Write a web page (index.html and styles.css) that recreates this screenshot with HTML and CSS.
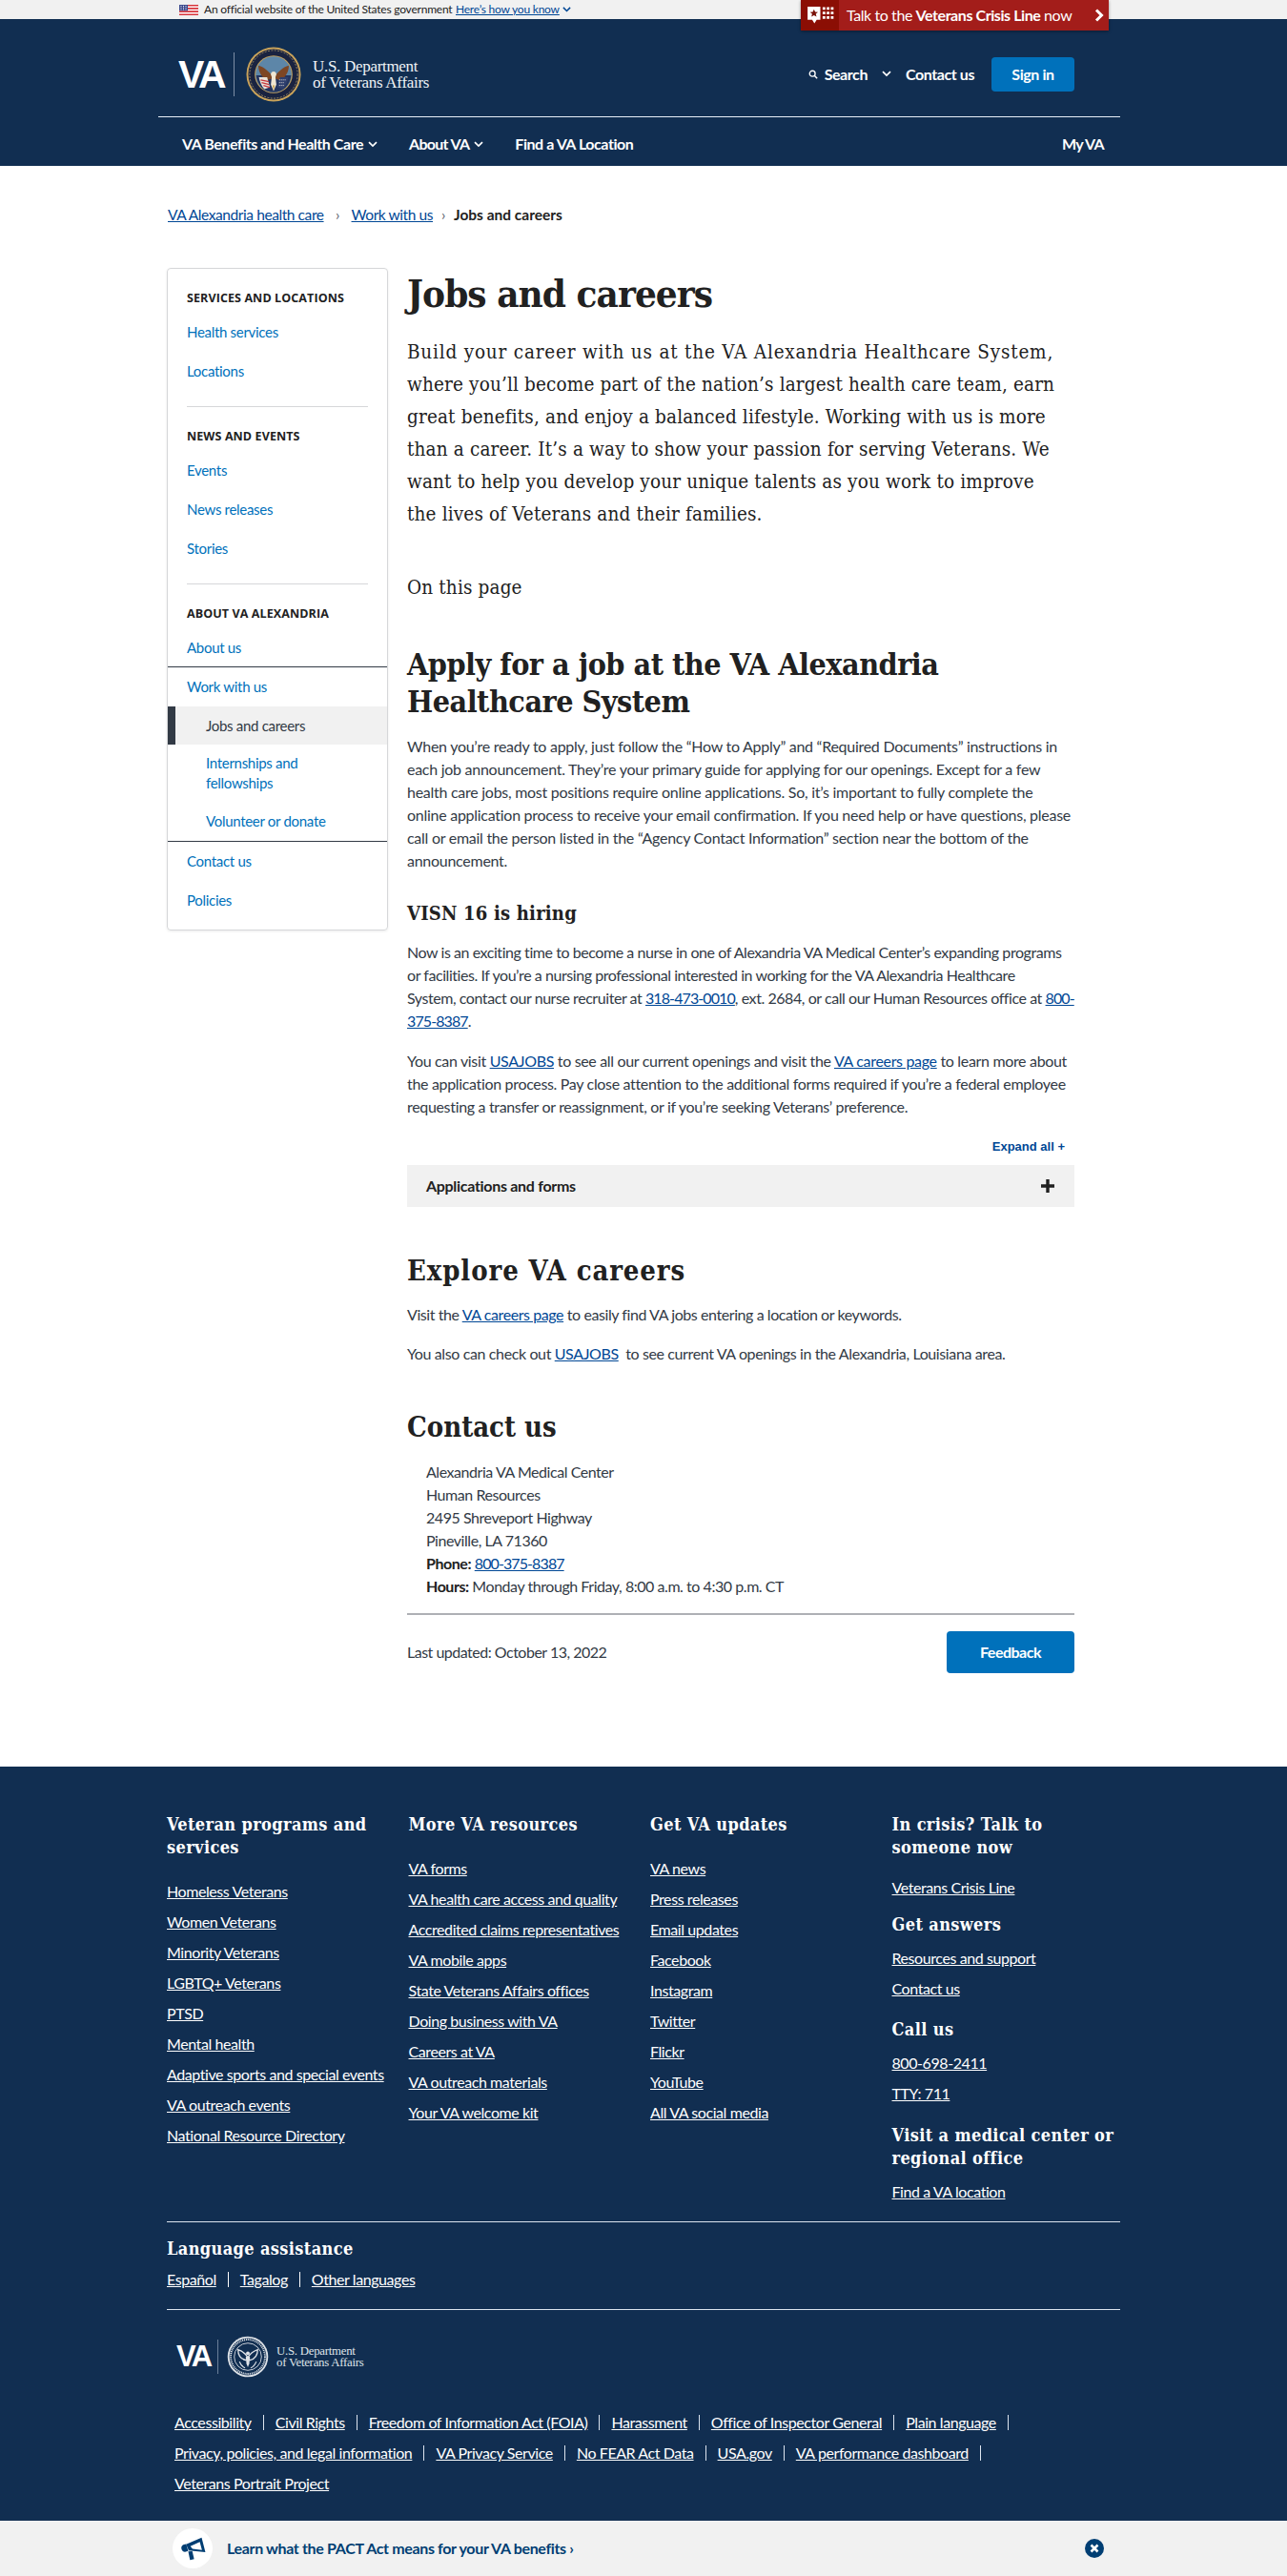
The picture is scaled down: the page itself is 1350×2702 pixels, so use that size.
FILE: index.html
```html
<!DOCTYPE html>
<html lang="en">
<head>
<meta charset="utf-8">
<title>Jobs and careers | VA Alexandria health care</title>
<link rel="stylesheet" href="styles.css">
</head>
<body>
<svg class="defs" width="0" height="0" aria-hidden="true">
  <defs>
    <symbol id="chev" viewBox="0 0 12 8"><path d="M1.2 1.2 6 6 10.8 1.2" fill="none" stroke="currentColor" stroke-width="2"/></symbol>
  </defs>
</svg>

<div class="gov-banner">
  <svg class="flag" viewBox="0 0 20 11" aria-hidden="true">
    <rect width="20" height="11" fill="#fff"/>
    <path d="M0 0h20v1.6H0zM0 3.1h20v1.6H0zM0 6.3h20v1.6H0zM0 9.4h20V11H0z" fill="#d8353b"/>
    <rect width="9" height="6.3" fill="#3c4a8e"/>
    <path d="M1.5 1.5h1M4 1.5h1M6.5 1.5h1M1.5 3.2h1M4 3.2h1M6.5 3.2h1M1.5 4.9h1M4 4.9h1M6.5 4.9h1" stroke="#fff" stroke-width=".9"/>
  </svg>
  <span class="gov-text">An official website of the United States government</span>
  <a class="gov-link" href="#">Here’s how you know</a>
  <svg class="gov-chev" aria-hidden="true"><use href="#chev"/></svg>
</div>

<a class="crisis" href="#">
  <span class="crisis-icon">
    <svg viewBox="0 0 30 22" width="30" height="22" aria-hidden="true">
      <path d="M1 1h14v14.500h-4l-2.500 4-2.500-4H1z" fill="#fff"/>
      <path d="m8 3.800 1.300 2.900 3.100.3-2.400 2 .8 3.100L8 10.500l-2.800 1.600.8-3.100-2.400-2 3.100-.3z" fill="#7a1208"/>
      <path d="M17.500 1.500h3v3h-3zM22 1.500h3v3h-3zM26.500 1.500h3v3h-3zM17.500 6.500h3v3h-3zM22 6.500h3v3h-3zM26.500 6.500h3v3h-3zM17.500 11.500h3v3h-3zM22 11.500h3v3h-3zM26.500 11.500h3v3h-3z" fill="#fff"/>
    </svg>
  </span>
  <span class="crisis-text">Talk to the <b>Veterans Crisis Line</b> now</span>
  <svg class="crisis-chev" viewBox="0 0 10 14" aria-hidden="true"><path d="M2 1.500 7.500 7 2 12.500" fill="none" stroke="#fff" stroke-width="3"/></svg>
</a>

<header class="masthead">
  <div class="masthead-top">
    <a class="logo" href="#">
      <span class="logo-va">VA</span>
      <span class="logo-rule"></span>
      <svg class="seal" viewBox="0 0 60 60" aria-hidden="true">
        <circle cx="30" cy="30" r="29.500" fill="#c9a35a"/>
        <circle cx="30" cy="30" r="27.500" fill="#1a2340"/>
        <circle cx="30" cy="30" r="26" fill="none" stroke="#b9a26c" stroke-width=".8" stroke-dasharray="2 1.500"/>
        <circle cx="30" cy="30" r="20.500" fill="#c9a35a"/>
        <circle cx="30" cy="30" r="19.500" fill="#5d86a8"/>
        <path d="M11 31h38c-1 11-9 18.500-19 18.500S12 42 11 31z" fill="#23345f"/>
        <path d="M30 34C26 28 20 22 13.500 20.500c0 6 3 13 9.500 16z" fill="#7d4624"/>
        <path d="M30 34c4-6 10-12 16.500-13.500 0 6-3 13-9.500 16z" fill="#7d4624"/>
        <path d="M14 33h9l3 11-6 2c-3-3-5-8-6-13z" fill="#e9e2d9"/>
        <path d="M16 36l9 2M17 39l8 2M19 42l7 2" stroke="#c8373c" stroke-width="1.300"/>
        <path d="M46 33h-9l-3 11 6 2c3-3 5-8 6-13z" fill="#2e3f6d"/>
        <path d="M36 36h7M36 39h6M36 42h5" stroke="#e9e2d9" stroke-width="1" stroke-dasharray="1 1"/>
        <path d="M27 30c0-2 1.500-3 3-3s3 1 3 3l-1 3 1 8-3 7-3-7 1-8z" fill="#f0e6d2"/>
        <path d="m29 42 1 6 1-6z" fill="#c59a3e"/>
      </svg>
      <span class="logo-text">U.S. Department<br>of Veterans Affairs</span>
    </a>
    <div class="utility">
      <a class="util-search" href="#">
        <svg class="search-ico" viewBox="0 0 12 12" aria-hidden="true"><circle cx="5" cy="5" r="3.500" fill="none" stroke="#fff" stroke-width="1.600"/><path d="m7.500 7.500 3.500 3.500" stroke="#fff" stroke-width="1.800"/></svg>
        <span>Search</span>
        <svg class="util-chev" aria-hidden="true"><use href="#chev"/></svg>
      </a>
      <a class="util-link" href="#">Contact us</a>
      <a class="signin" href="#">Sign in</a>
    </div>
  </div>
  <nav class="mainnav">
    <a class="nav-item" href="#">VA Benefits and Health Care<svg class="nav-chev" aria-hidden="true"><use href="#chev"/></svg></a>
    <a class="nav-item nav-tight" href="#">About VA<svg class="nav-chev" aria-hidden="true"><use href="#chev"/></svg></a>
    <a class="nav-item" href="#">Find a VA Location</a>
    <a class="nav-item nav-tight nav-right" href="#">My VA</a>
  </nav>
</header>

<nav class="crumbs">
  <a href="#">VA Alexandria health care</a><span class="crumb-sep">›</span><a href="#">Work with us</a><span class="crumb-sep crumb-sep-last">›</span><b>Jobs and careers</b>
</nav>

<div class="page">
  <aside class="sidenav">
    <h2 class="side-h side-h-first">Services and locations</h2>
    <a class="side-a" href="#">Health services</a>
    <a class="side-a" href="#">Locations</a>
    <hr class="side-rule">
    <h2 class="side-h">News and events</h2>
    <a class="side-a" href="#">Events</a>
    <a class="side-a" href="#">News releases</a>
    <a class="side-a" href="#">Stories</a>
    <hr class="side-rule">
    <h2 class="side-h">About VA Alexandria</h2>
    <a class="side-a" href="#">About us</a>
    <div class="side-nest">
      <a class="side-a" href="#">Work with us</a>
      <a class="side-a sub current" href="#">Jobs and careers</a>
      <a class="side-a sub multi" href="#">Internships and fellowships</a>
      <a class="side-a sub" href="#">Volunteer or donate</a>
    </div>
    <a class="side-a" href="#">Contact us</a>
    <a class="side-a" href="#">Policies</a>
  </aside>

  <main class="content">
    <h1>Jobs and careers</h1>
    <p class="lead"><span class="lead-first">Build your career with us at the VA Alexandria Healthcare System,</span><br>where you’ll become part of the nation’s largest health care team, earn<br>great benefits, and enjoy a balanced lifestyle. Working with us is more<br>than a career. It’s a way to show your passion for serving Veterans. We<br>want to help you develop your unique talents as you work to improve<br>the lives of Veterans and their families.</p>
    <p class="onpage">On this page</p>
    <h2 class="h-apply">Apply for a job at the VA Alexandria Healthcare System</h2>
    <p class="p-apply">When you’re ready to apply, just follow the “How to Apply” and “Required Documents” instructions in each job announcement. They’re your primary guide for applying for our openings. Except for a few health care jobs, most positions require online applications. So, it’s important to fully complete the online application process to receive your email confirmation. If you need help or have questions, please call or email the person listed in the “Agency Contact Information” section near the bottom of the announcement.</p>
    <h3>VISN 16 is hiring</h3>
    <p class="p-visn">Now is an exciting time to become a nurse in one of Alexandria VA Medical Center’s expanding programs or facilities. If you’re a nursing professional interested in working for the VA Alexandria Healthcare<br>System, contact our nurse recruiter at <a class="phone" href="#">318-473-0010</a>, ext. 2684, or call our Human Resources office at <a class="phone" href="#">800-<wbr>375-8387</a>.</p>
    <p class="p-visit">You can visit <a href="#">USAJOBS</a> to see all our current openings and visit the <a href="#">VA careers page</a> to learn more about the application process. Pay close attention to the additional forms required if you’re a federal employee requesting a transfer or reassignment, or if you’re seeking Veterans’ preference.</p>
    <div class="expand">Expand all +</div>
    <div class="accordion"><span>Applications and forms</span>
      <svg class="plus" viewBox="0 0 16 16" aria-hidden="true"><path d="M8 1v14M1 8h14" stroke="#212121" stroke-width="3.400"/></svg>
    </div>
    <h2 class="h-sec h-explore">Explore VA careers</h2>
    <p class="p-a">Visit the <a href="#">VA careers page</a> to easily find VA jobs entering a location or keywords.</p>
    <p class="p-b">You also can check out <a href="#">USAJOBS</a>&nbsp; to see current VA openings in the Alexandria, Louisiana area.</p>
    <h2 class="h-sec h-contact">Contact us</h2>
    <address>
      Alexandria VA Medical Center<br>
      Human Resources<br>
      2495 Shreveport Highway<br>
      Pineville, LA 71360<br>
      <b>Phone:</b> <a class="phone" href="#">800-375-8387</a><br>
      <b>Hours:</b> Monday through Friday, 8:00 a.m. to 4:30 p.m. CT
    </address>
    <div class="updated">
      <span>Last updated: October 13, 2022</span>
      <a class="feedback" href="#">Feedback</a>
    </div>
  </main>
</div>

<footer class="footer">
  <div class="foot-cols">
    <div class="foot-col">
      <h2>Veteran programs and services</h2>
      <a href="#">Homeless Veterans</a>
      <a href="#">Women Veterans</a>
      <a href="#">Minority Veterans</a>
      <a href="#">LGBTQ+ Veterans</a>
      <a href="#">PTSD</a>
      <a href="#">Mental health</a>
      <a href="#">Adaptive sports and special events</a>
      <a href="#">VA outreach events</a>
      <a href="#">National Resource Directory</a>
    </div>
    <div class="foot-col">
      <h2>More VA resources</h2>
      <a href="#">VA forms</a>
      <a href="#">VA health care access and quality</a>
      <a href="#">Accredited claims representatives</a>
      <a href="#">VA mobile apps</a>
      <a href="#">State Veterans Affairs offices</a>
      <a href="#">Doing business with VA</a>
      <a href="#">Careers at VA</a>
      <a href="#">VA outreach materials</a>
      <a href="#">Your VA welcome kit</a>
    </div>
    <div class="foot-col">
      <h2>Get VA updates</h2>
      <a href="#">VA news</a>
      <a href="#">Press releases</a>
      <a href="#">Email updates</a>
      <a href="#">Facebook</a>
      <a href="#">Instagram</a>
      <a href="#">Twitter</a>
      <a href="#">Flickr</a>
      <a href="#">YouTube</a>
      <a href="#">All VA social media</a>
    </div>
    <div class="foot-col foot-col-last">
      <h2 class="fh-crisis">In crisis? Talk to someone now</h2>
      <a href="#">Veterans Crisis Line</a>
      <h2 class="fh-next">Get answers</h2>
      <a href="#">Resources and support</a>
      <a href="#">Contact us</a>
      <h2 class="fh-next fh-call">Call us</h2>
      <a href="#">800-698-2411</a>
      <a href="#">TTY: 711</a>
      <h2 class="fh-next fh-visit">Visit a medical center or regional office</h2>
      <a href="#">Find a VA location</a>
    </div>
  </div>
  <div class="foot-lang">
    <h2>Language assistance</h2>
    <div class="lang-links"><a href="#">Español</a><a href="#">Tagalog</a><a href="#">Other languages</a></div>
  </div>
  <a class="foot-logo" href="#">
    <span class="flogo-va">VA</span>
    <span class="flogo-rule"></span>
    <svg class="fseal" viewBox="0 0 60 60" aria-hidden="true">
      <circle cx="30" cy="30" r="29" fill="#dfe3e8"/>
      <circle cx="30" cy="30" r="26.500" fill="#112e51"/>
      <circle cx="30" cy="30" r="24.500" fill="none" stroke="#dfe3e8" stroke-width="2.600" stroke-dasharray="1.400 1.200"/>
      <circle cx="30" cy="30" r="19.500" fill="#112e51" stroke="#dfe3e8" stroke-width="1.200"/>
      <path d="M30 31c-3-5-8-9-14-11 0 7 4 13 11 15zM30 31c3-5 8-9 14-11 0 7-4 13-11 15z" fill="none" stroke="#dfe3e8" stroke-width="1.800"/>
      <circle cx="30" cy="25" r="2.600" fill="#dfe3e8"/>
      <path d="M27 30h6l-1 10-2 5-2-5z" fill="#dfe3e8"/>
      <path d="M18 37c2 5 5 8 8 9M42 37c-2 5-5 8-8 9" fill="none" stroke="#dfe3e8" stroke-width="1.600"/>
    </svg>
    <span class="flogo-text">U.S. Department<br>of Veterans Affairs</span>
  </a>
  <ul class="foot-links">
    <li><a href="#">Accessibility</a></li>
    <li><a href="#">Civil Rights</a></li>
    <li><a href="#">Freedom of Information Act (FOIA)</a></li>
    <li><a href="#">Harassment</a></li>
    <li><a href="#">Office of Inspector General</a></li>
    <li><a href="#">Plain language</a></li>
    <li><a href="#">Privacy, policies, and legal information</a></li>
    <li><a href="#">VA Privacy Service</a></li>
    <li><a href="#">No FEAR Act Data</a></li>
    <li><a href="#">USA.gov</a></li>
    <li><a href="#">VA performance dashboard</a></li>
    <li class="li-last"><a href="#">Veterans Portrait Project</a></li>
  </ul>
</footer>

<div class="pact">
  <span class="pact-icon">
    <svg viewBox="0 0 24 24" width="27" height="27" aria-hidden="true">
      <path fill-rule="evenodd" d="M5.500 7.800 20 1.500l3.500 13.500-15.500-1.500zM9.500 9.500l2 2.600 8.800.9-2-7.500z" fill="#003e73"/>
      <path d="M5.600 7.500 7.500 14l-3 .8C2.800 14.800 1.400 13.400 1.100 11.500.9 9.900 2 8.500 3.500 8.100z" fill="#003e73"/>
      <path d="m7.500 14.500 3.800-.2 1.700 7.200-3.800 1z" fill="#003e73"/>
    </svg>
  </span>
  <a class="pact-link" href="#">Learn what the PACT Act means for your VA benefits ›</a>
  <svg class="pact-close" viewBox="0 0 20 20" aria-hidden="true"><circle cx="10" cy="10" r="10" fill="#003e73"/><path d="m6.500 6.500 7 7M13.500 6.500l-7 7" stroke="#fff" stroke-width="2.600"/></svg>
</div>
</body>
</html>
```
FILE: styles.css
```css
* { box-sizing: border-box; }
html, body { margin: 0; padding: 0; }
body {
  width: 1350px;
  font-family: "Lato", "Liberation Sans", sans-serif;
  font-size: 16px;
  line-height: 24px;
  letter-spacing: -0.42px;
  color: #323a45;
  background: #fff;
  position: relative;
}
a { color: #004795; }
.defs { position: absolute; }
h1, h2, h3, p, address, ul { margin: 0; padding: 0; }

/* government banner */
.gov-banner {
  height: 20px;
  background: #f1f1f1;
  display: flex;
  align-items: center;
  padding-left: 188px;
  font-size: 12px;
  line-height: 20px;
  color: #212121;
}
.flag { width: 20px; height: 11px; margin-right: 6px; }
.gov-text { width: 264px; letter-spacing: -0.22px; }
.gov-link { letter-spacing: -0.22px; }
.gov-chev { width: 9px; height: 6px; margin-left: 3px; color: #004795; }

/* crisis tab */
.crisis {
  position: absolute;
  left: 840px;
  top: 0;
  width: 323px;
  height: 32px;
  background: #a31d1a;
  color: #fff;
  display: flex;
  align-items: center;
  text-decoration: none;
  box-shadow: 0 1px 3px rgba(0,0,0,.4);
  font-size: 16px;
}
.crisis-icon {
  width: 40px;
  height: 32px;
  background: #8b0e04;
  display: flex;
  align-items: center;
  justify-content: center;
}
.crisis-icon svg { width: 29px; height: 21px; }
.crisis-text { margin-left: 8px; width: 248px; white-space: nowrap; }
.crisis-chev { width: 10px; height: 14px; margin-left: 12px; }

/* masthead */
.masthead { background: #112e51; height: 154px; color: #fff; padding: 0 175px 0 166px; }
.masthead-top {
  height: 103px;
  border-bottom: 1px solid #e8f0f8;
  padding: 13px 48px 0 21px;
  display: flex;
  align-items: center;
  justify-content: space-between;
}
.logo { display: flex; align-items: center; text-decoration: none; color: #fff; }
.logo-va {
  font-family: "Liberation Sans", sans-serif;
  font-weight: 700;
  font-size: 41px;
  line-height: 46px;
  letter-spacing: -3.400px;
  width: 58px;
}
.logo-rule { width: 1px; height: 46px; background: #7d8ea5; }
.seal { width: 58px; height: 58px; margin-left: 12px; }
.logo-text {
  font-family: "Liberation Serif", serif;
  font-size: 17px;
  line-height: 17px;
  letter-spacing: -0.3px;
  margin-left: 12px;
  color: #eef2f6;
}
.utility { display: flex; align-items: center; font-weight: 700; }
.util-search { display: flex; align-items: center; color: #fff; text-decoration: none; }
.search-ico { width: 10px; height: 10px; margin-right: 7px; }
.util-chev { width: 10px; height: 7px; margin-left: 15px; color: #fff; }
.util-link { color: #fff; text-decoration: none; margin-left: 15px; }
.signin {
  margin-left: 18px;
  width: 87px;
  height: 36px;
  border-radius: 4px;
  background: #0071bb;
  color: #fff;
  text-decoration: none;
  display: flex;
  align-items: center;
  justify-content: center;
}
.mainnav { display: flex; align-items: center; height: 50px; padding: 6px 17px 0 25px; font-weight: 700; letter-spacing: -0.46px; }
.nav-item { color: #fff; text-decoration: none; display: flex; align-items: center; margin-right: 33px; white-space: nowrap; }
.nav-tight { letter-spacing: -0.7px; }
.nav-chev { width: 10px; height: 7px; margin-left: 5px; color: #fff; }
.nav-right { margin-left: auto; margin-right: 0; }

/* breadcrumb */
.crumbs { padding: 39px 0 0 176px; height: 107px; font-size: 15.500px; }
.crumbs b { color: #212121; letter-spacing: 0; }
.crumb-sep { margin: 0 12.500px; color: #5b616b; }
.crumb-sep-last { margin: 0 9px; }

/* layout */
.page { display: flex; align-items: flex-start; padding-left: 175px; }
.sidenav {
  width: 232px;
  height: 695px;
  margin-right: 20px;
  border: 1px solid #d6d7d9;
  border-radius: 4px;
  box-shadow: 0 1px 3px rgba(0,0,0,.08);
  font-size: 15px;
  letter-spacing: -0.3px;
}
.side-h {
  margin: 0 20px 3px;
  line-height: 24px;
  font-weight: 700;
  color: #212121;
  text-transform: uppercase;
  letter-spacing: 0.1px;
  font-family: "Open Sans", sans-serif;
  font-size: 12.500px;
}
.side-h-first { padding-top: 19px; }
.side-a {
  display: block;
  padding: 8px 20px 9px;
  line-height: 24px;
  color: #0071bb;
  text-decoration: none;
}
.side-rule { margin: 16px 20px 19px; border: 0; border-top: 1px solid #d6d7d9; height: 0; }
.side-nest { border-top: 1px solid #323a45; border-bottom: 1px solid #323a45; margin-top: -1px; }
.sub { padding-left: 40px; }
.multi { line-height: 21px; padding-top: 9px; padding-bottom: 9px; }
.current {
  background: #f1f1f1;
  border-left: 8px solid #323a45;
  padding-left: 32px;
  color: #323a45;
  padding-top: 8px;
  padding-bottom: 8px;
}

/* main */
.content { width: 700px; color: #323a45; }
.content h1, .content h2, .content h3, .foot-col h2, .foot-lang h2 {
  font-family: "DejaVu Serif Condensed", "DejaVu Serif", serif;
  font-weight: 700;
  color: #212121;
}
.content h1 { margin-top: 3px; font-size: 40px; line-height: 48px; letter-spacing: -0.95px; }
.lead, .onpage {
  font-family: "DejaVu Serif Condensed", "DejaVu Serif", serif;
  font-size: 20.500px;
  line-height: 34px;
  color: #212121;
  letter-spacing: 0.15px;
  white-space: nowrap;
}
.lead-first { letter-spacing: 0.8px; }
.lead { margin-top: 20px; }
.onpage { margin-top: 43px; }
.content .h-apply { margin-top: 45px; font-size: 32px; line-height: 39px; letter-spacing: -0.5px; }
.p-apply { margin-top: 15px; letter-spacing: -0.27px; }
.content h3 { margin-top: 30px; font-size: 20px; line-height: 26px; letter-spacing: 0.2px; }
.p-visn { margin-top: 16px; letter-spacing: -0.44px; }
.phone { letter-spacing: -0.9px; }
.p-visit { margin-top: 18px; letter-spacing: -0.33px; }
.expand {
  margin-top: 20px;
  padding-right: 10px;
  text-align: right;
  font-family: "Liberation Sans", sans-serif;
  font-size: 13px;
  font-weight: 700;
  line-height: 20px;
  letter-spacing: 0;
  color: #004795;
}
.accordion {
  margin-top: 9px;
  height: 44px;
  background: #f1f1f1;
  padding: 0 20px;
  display: flex;
  align-items: center;
  justify-content: space-between;
  font-weight: 700;
  color: #212121;
  letter-spacing: -0.3px;
}
.plus { width: 16px; height: 16px; }
.content .h-sec { font-size: 29px; line-height: 36px; letter-spacing: 0; }
.content .h-explore { margin-top: 49px; letter-spacing: 0.9px; }
.p-a { margin-top: 16px; }
.p-b { margin-top: 17px; letter-spacing: -0.38px; }
.h-contact { margin-top: 47px; }
address { margin-top: 17px; padding-left: 20px; font-style: normal; letter-spacing: -0.45px; }
address b { color: #212121; }
.updated {
  margin-top: 16px;
  border-top: 2px solid #aeb0b5;
  padding-top: 17px;
  display: flex;
  align-items: center;
  justify-content: space-between;
  letter-spacing: -0.5px;
}
.feedback {
  width: 134px;
  height: 44px;
  border-radius: 4px;
  background: #0071bb;
  color: #fff;
  font-weight: 700;
  text-decoration: none;
  display: flex;
  align-items: center;
  justify-content: center;
}

/* footer */
.footer { margin-top: 98px; height: 791px; background: #112e51; color: #fff; padding: 49px 175px 0; }
.footer a { color: #fff; }
.foot-cols { display: grid; grid-template-columns: repeat(4, 253.500px); height: 428px; margin-right: -14px; border-bottom: 0; }
.foot-col { display: flex; flex-direction: column; align-items: flex-start; white-space: nowrap; }
.foot-col a { display: block; line-height: 24px; margin-bottom: 8px; }
.foot-col h2, .foot-lang h2 {
  font-size: 18px;
  line-height: 24px;
  color: #fff;
  letter-spacing: 0.38px;
  margin-bottom: 22px;
  white-space: normal;
  max-width: 236px;
}
.foot-col h2.fh-crisis { margin-bottom: 18px; }
.foot-col h2.fh-next { margin-top: 7px; margin-bottom: 11px; }
.foot-col h2.fh-call { margin-top: 10.500px; }
.foot-col h2.fh-visit { margin-top: 12px; }
.foot-col-last h2 { max-width: 240px; }
.foot-lang { border-top: 1px solid #dce4ef; border-bottom: 1px solid #dce4ef; height: 93px; padding-top: 16px; }
.foot-lang h2 { margin-bottom: 8px; max-width: none; }
.lang-links { display: flex; }
.lang-links a { padding-right: 12px; margin-right: 12px; border-right: 1px solid #fff; line-height: 16px; height: 16px; margin-top: 4px; }
.lang-links a:last-child { border: 0; }
.foot-logo { display: flex; align-items: center; margin: 27px 0 0 10px; height: 44px; text-decoration: none; }
.flogo-va {
  font-family: "Liberation Sans", sans-serif;
  font-weight: 700;
  font-size: 31px;
  line-height: 36px;
  letter-spacing: -2.600px;
  width: 43px;
}
.flogo-rule { width: 1px; height: 36px; background: #6b7f99; }
.fseal { width: 44px; height: 44px; margin-left: 9px; }
.flogo-text {
  font-family: "Liberation Serif", serif;
  font-size: 12.800px;
  line-height: 12px;
  letter-spacing: -0.25px;
  margin-left: 8px;
  color: #dfe3e8;
}
.foot-links {
  list-style: none;
  margin: 35px 0 0 8px;
  width: 992px;
  display: flex;
  flex-wrap: wrap;
  row-gap: 8px;
}
.foot-links li { display: flex; align-items: center; white-space: nowrap; }
.foot-links li::after { content: ""; width: 1px; height: 16px; background: #dce4ef; margin: 0 12px; }
.foot-links .li-last::after { display: none; }

/* pact bar */
.pact {
  height: 58px;
  background: #f1f1f1;
  display: flex;
  align-items: center;
  padding: 0 192px 0 181px;
}
.pact-icon {
  width: 42px;
  height: 42px;
  border-radius: 50%;
  background: #fff;
  display: flex;
  align-items: center;
  justify-content: center;
  flex: none;
}
.pact-link { margin-left: 15px; font-weight: 700; color: #003e73; text-decoration: none; letter-spacing: -0.35px; }
.pact-close { margin-left: auto; width: 20px; height: 20px; }
```
